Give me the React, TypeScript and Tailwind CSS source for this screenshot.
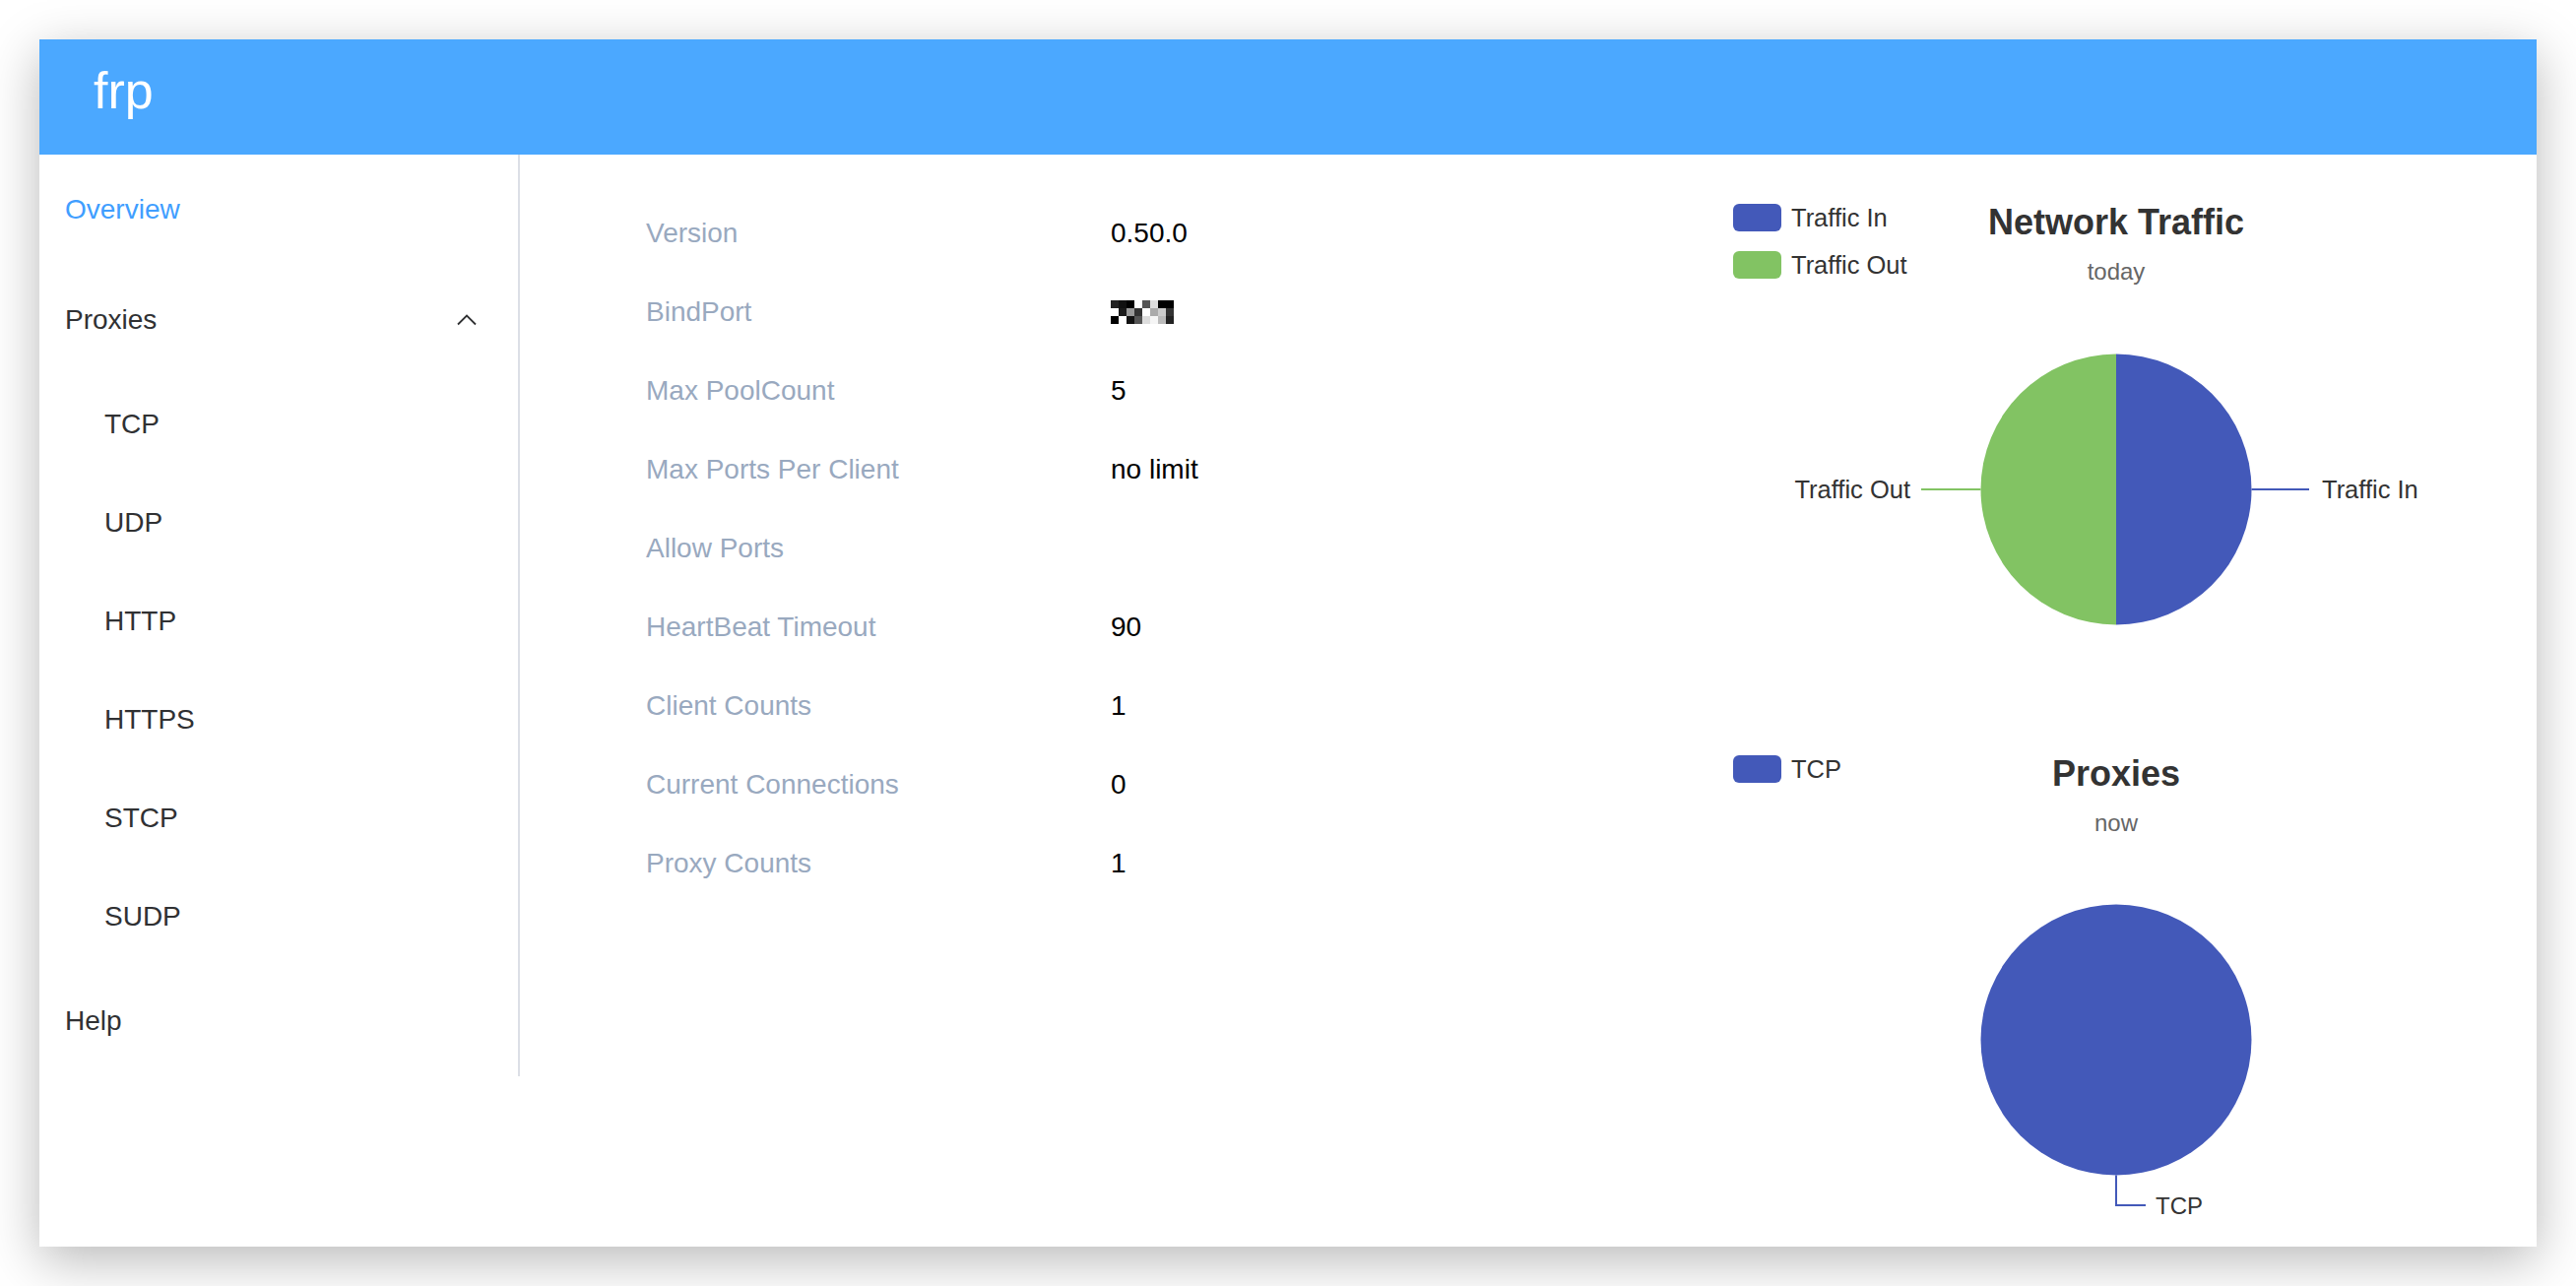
import React from "react";

const BLUE = "#4359b9";
const GREEN = "#82c363";
const FONT = "Liberation Sans, Arial, sans-serif";

const mosaic: string[][] = [
  ["#222222", "#111111", "#000000", "#ffffff", "#555555", "#dddddd", "#000000", "#000000"],
  ["#ffffff", "#1a1a1a", "#999999", "#333333", "#ffffff", "#aaaaaa", "#cccccc", "#333333"],
  ["#000000", "#ffffff", "#111111", "#555555", "#dddddd", "#f5f5f5", "#bbbbbb", "#222222"],
];

function Mosaic() {
  return (
    <div className="flex flex-col">
      {mosaic.map((row, i) => (
        <div key={i} className="flex">
          {row.map((c, j) => (
            <div key={j} className="w-[8px] h-[8px]" style={{ backgroundColor: c }} />
          ))}
        </div>
      ))}
    </div>
  );
}

const info: [string, React.ReactNode][] = [
  ["Version", "0.50.0"],
  ["BindPort", <Mosaic key="m" />],
  ["Max PoolCount", "5"],
  ["Max Ports Per Client", "no limit"],
  ["Allow Ports", ""],
  ["HeartBeat Timeout", "90"],
  ["Client Counts", "1"],
  ["Current Connections", "0"],
  ["Proxy Counts", "1"],
];

function Legend({ items }: { items: { color: string; label: string }[] }) {
  return (
    <g>
      {items.map((it, i) => (
        <g key={it.label}>
          <rect x={38} y={40 + i * 48} width={49} height={28} rx={6} fill={it.color} />
          <text x={97} y={54 + i * 48} dominantBaseline="central" fontSize={25.5} fill="#333" fontFamily={FONT}>
            {it.label}
          </text>
        </g>
      ))}
    </g>
  );
}

function Titles({ title, sub }: { title: string; sub: string }) {
  return (
    <g>
      <text x={427} y={71} textAnchor="middle" fontSize={36} fontWeight={700} fill="#333" fontFamily={FONT}>
        {title}
      </text>
      <text x={427} y={117} textAnchor="middle" fontSize={24} fill="#666" fontFamily={FONT}>
        {sub}
      </text>
    </g>
  );
}

function TrafficChart() {
  const cx = 427, cy = 330, r = 137.5;
  return (
    <svg width={854} height={560} className="block shrink-0">
      <Legend items={[{ color: BLUE, label: "Traffic In" }, { color: GREEN, label: "Traffic Out" }]} />
      <Titles title="Network Traffic" sub="today" />
      <path d={`M ${cx} ${cy} L ${cx} ${cy - r} A ${r} ${r} 0 0 1 ${cx} ${cy + r} Z`} fill={BLUE} />
      <path d={`M ${cx} ${cy} L ${cx} ${cy + r} A ${r} ${r} 0 0 1 ${cx} ${cy - r} Z`} fill={GREEN} />
      <line x1={cx + r} y1={cy} x2={623} y2={cy} stroke={BLUE} strokeWidth={2} />
      <text x={636} y={cy} dominantBaseline="central" fontSize={25.5} fill="#333" fontFamily={FONT}>
        Traffic In
      </text>
      <line x1={cx - r} y1={cy} x2={229} y2={cy} stroke={GREEN} strokeWidth={2} />
      <text x={218} y={cy} textAnchor="end" dominantBaseline="central" fontSize={25.5} fill="#333" fontFamily={FONT}>
        Traffic Out
      </text>
    </svg>
  );
}

function ProxiesChart() {
  const cx = 427, cy = 329, r = 137.5;
  return (
    <svg width={854} height={560} className="block shrink-0">
      <Legend items={[{ color: BLUE, label: "TCP" }]} />
      <Titles title="Proxies" sub="now" />
      <circle cx={cx} cy={cy} r={r} fill={BLUE} />
      <polyline points={`${cx},${cy + r} ${cx},497 457,497`} fill="none" stroke={BLUE} strokeWidth={2} />
      <text x={467} y={497} dominantBaseline="central" fontSize={24} fill="#333" fontFamily={FONT}>
        TCP
      </text>
    </svg>
  );
}

function Chevron() {
  return (
    <svg width={20} height={12} viewBox="0 0 20 12" className="block">
      <polyline points="1,10.5 10,1.5 19,10.5" fill="none" stroke="#303133" strokeWidth={1.8} />
    </svg>
  );
}

export default function App() {
  const subs = ["TCP", "UDP", "HTTP", "HTTPS", "STCP", "SUDP"];
  return (
    <div className="w-[2616px] h-[1306px] bg-white p-[40px] font-['Liberation_Sans',Arial,sans-serif]">
      <div className="w-full h-full bg-white flex flex-col overflow-hidden shadow-[0_14px_50px_rgba(0,0,0,0.28)]">
        <div className="h-[117px] shrink-0 bg-[#4ba8ff] flex items-start pt-[26px] pl-[55px]">
          <span className="text-white text-[52px] leading-[52px]">frp</span>
        </div>
        <div className="flex flex-1 min-h-0">
          <div className="w-[488px] shrink-0 self-start border-r-2 border-[#dcdfe6] text-[28px] text-[#303133]">
            <div className="h-[112px] flex items-center pl-[26px] text-[#409eff]">Overview</div>
            <div className="h-[112px] flex items-center justify-between pl-[26px] pr-[42px]">
              <span>Proxies</span>
              <Chevron />
            </div>
            {subs.map((s) => (
              <div key={s} className="h-[100px] flex items-center pl-[66px]">
                {s}
              </div>
            ))}
            <div className="h-[112px] flex items-center pl-[26px]">Help</div>
          </div>
          <div className="w-[1194px] shrink-0 pl-[128px] pt-[40px]">
            {info.map(([k, v]) => (
              <div key={k} className="h-[80px] flex items-center text-[28px]">
                <div className="w-[472px] text-[#99a9bf]">{k}</div>
                <div className="text-black">{v}</div>
              </div>
            ))}
          </div>
          <div className="w-[854px] shrink-0 flex flex-col pt-[10px]">
            <TrafficChart />
            <ProxiesChart />
          </div>
        </div>
      </div>
    </div>
  );
}
